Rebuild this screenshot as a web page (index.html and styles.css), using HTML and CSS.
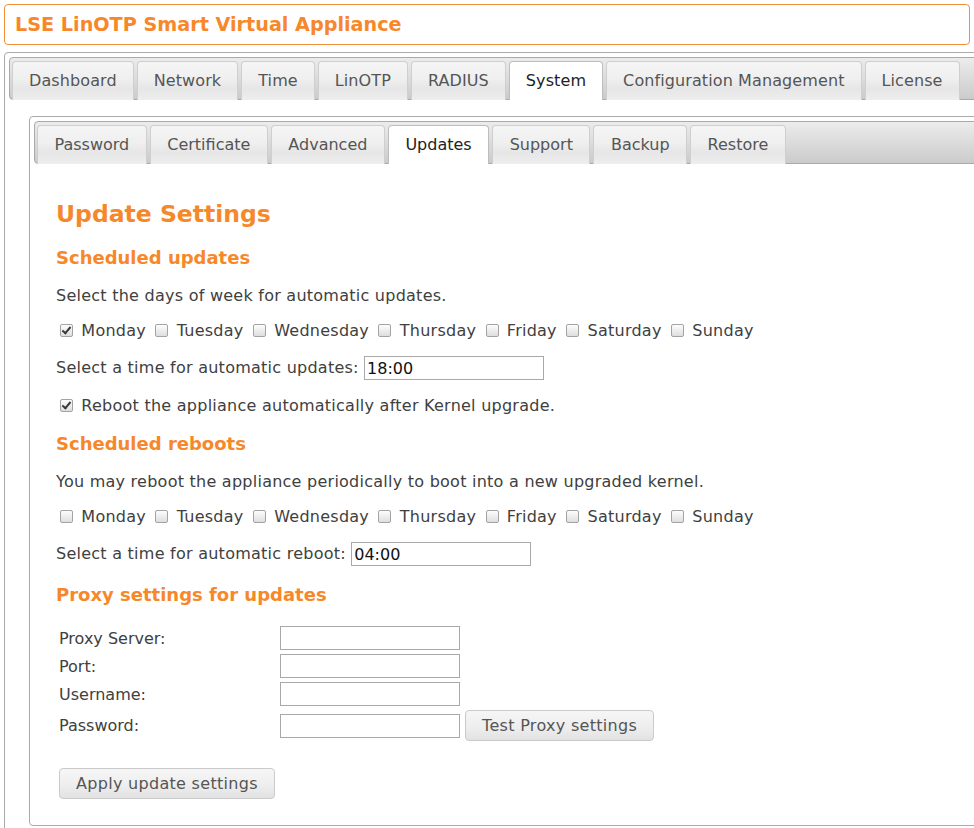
FILE: index.html
```html
<!DOCTYPE html>
<html lang="en">
<head>
  <meta charset="UTF-8">
  <title>LSE LinOTP Smart Virtual Appliance</title>
  <meta name="viewport" content="width=device-width, initial-scale=1.0">
  <link rel="stylesheet" href="styles.css">
</head>
<body>

<div class="header">
  <h1>LSE LinOTP Smart Virtual Appliance</h1>
</div>

<div class="tabs main-tabs">
  <ul class="tab-nav">
    <li><a href="#">Dashboard</a></li>
    <li><a href="#">Network</a></li>
    <li><a href="#">Time</a></li>
    <li><a href="#">LinOTP</a></li>
    <li><a href="#">RADIUS</a></li>
    <li class="active"><a href="#">System</a></li>
    <li><a href="#">Configuration Management</a></li>
    <li><a href="#">License</a></li>
  </ul>

  <div class="tab-panel">
    <div class="tabs sub-tabs">
      <ul class="tab-nav">
        <li><a href="#">Password</a></li>
        <li><a href="#">Certificate</a></li>
        <li><a href="#">Advanced</a></li>
        <li class="active"><a href="#">Updates</a></li>
        <li><a href="#">Support</a></li>
        <li><a href="#">Backup</a></li>
        <li><a href="#">Restore</a></li>
      </ul>

      <div class="tab-panel settings">
        <h2>Update Settings</h2>

        <h3>Scheduled updates</h3>
        <p>Select the days of week for automatic updates.</p>
        <p>
          <input type="checkbox" checked> Monday
          <input type="checkbox"> Tuesday
          <input type="checkbox"> Wednesday
          <input type="checkbox"> Thursday
          <input type="checkbox"> Friday
          <input type="checkbox"> Saturday
          <input type="checkbox"> Sunday
        </p>
        <p>Select a time for automatic updates: <input type="text" class="time" value="18:00"></p>
        <p><input type="checkbox" checked> Reboot the appliance automatically after Kernel upgrade.</p>

        <h3>Scheduled reboots</h3>
        <p>You may reboot the appliance periodically to boot into a new upgraded kernel.</p>
        <p>
          <input type="checkbox"> Monday
          <input type="checkbox"> Tuesday
          <input type="checkbox"> Wednesday
          <input type="checkbox"> Thursday
          <input type="checkbox"> Friday
          <input type="checkbox"> Saturday
          <input type="checkbox"> Sunday
        </p>
        <p>Select a time for automatic reboot: <input type="text" class="time" value="04:00"></p>

        <h3>Proxy settings for updates</h3>
        <table class="proxy">
          <tr>
            <td class="label">Proxy Server:</td>
            <td><input type="text"></td>
          </tr>
          <tr>
            <td class="label">Port:</td>
            <td><input type="text"></td>
          </tr>
          <tr>
            <td class="label">Username:</td>
            <td><input type="text"></td>
          </tr>
          <tr>
            <td class="label">Password:</td>
            <td><input type="password"> <button>Test Proxy settings</button></td>
          </tr>
        </table>

        <div class="actions">
          <button>Apply update settings</button>
        </div>
      </div>
    </div>
  </div>
</div>

</body>
</html>
```

FILE: styles.css
```css
:root {
  --orange: #f7882a;
  --border: #aaaaaa;
  --tab-border: #cfcfcf;
  --text: #404040;
}

* {
  box-sizing: border-box;
}

html, body {
  overflow: hidden;
}

body {
  font-family: 'DejaVu Sans', Verdana, sans-serif;
  font-size: 16px;
  color: var(--text);
  margin: 0;
  padding: 4px;
  background: #fff;
}

/* header */

.header {
  border: 1px solid #f0903c;
  border-radius: 4px;
  padding: 9px 10px;
  margin-bottom: 7px;
}

.header h1 {
  margin: 0;
  font-size: 19.2px;
  line-height: 21px;
  font-weight: bold;
  color: var(--orange);
}

/* tabs */

.tabs {
  border: 1px solid var(--border);
  border-radius: 4px;
  padding: 4px;
  background: #fff;
}

.main-tabs {
  width: 1010px;
}

.tab-nav {
  list-style: none;
  margin: 0;
  padding: 3px 2px 0;
  display: flex;
  border: 1px solid var(--border);
  border-radius: 4px;
  background: linear-gradient(to bottom, #ececec, #cbcbcb);
}

.tab-nav li {
  margin: 0 3px -1px 0;
  border: 1px solid var(--tab-border);
  border-bottom: none;
  border-radius: 4px 4px 0 0;
  background: linear-gradient(to bottom, #f5f5f5 0%, #efefef 45%, #e6e6e6 70%, #eeeeee 100%);
}

.tab-nav li a {
  display: block;
  padding: 0 16px;
  line-height: 37px;
  color: #555;
  text-decoration: none;
  letter-spacing: 0.1px;
}

.sub-tabs .tab-nav li a {
  padding: 0 16.5px;
  letter-spacing: 0;
}

.tab-nav li.active {
  background: #fff;
  border-color: #bdbdbd;
  padding-bottom: 1px;
}

.tab-nav li.active a {
  color: #222;
}

.tab-panel {
  padding: 16px 20px;
}

.sub-tabs .settings {
  padding: 16px 22px 16px;
}

/* settings content */

h2 {
  font-size: 23.5px;
  color: var(--orange);
  margin: 0.83em 0;
}

h3 {
  font-size: 18px;
  color: var(--orange);
  margin: 1em 0;
}

p {
  margin: 16px 0;
  letter-spacing: 0.25px;
}

input[type="text"],
input[type="password"] {
  font-family: 'DejaVu Sans', Verdana, sans-serif;
  font-size: 16px;
  letter-spacing: 0;
  color: #111;
  width: 180px;
  height: 24px;
  padding: 1px 2px;
  border: 1px solid #a9a9a9;
  border-radius: 0;
  vertical-align: middle;
  margin: 0;
}

input[type="checkbox"] {
  -webkit-appearance: none;
  appearance: none;
  position: relative;
  width: 13px;
  height: 13px;
  margin: 0 3px 0 4px;
  border: 1px solid #a3a3a3;
  border-radius: 2px;
  background: linear-gradient(to bottom, #fdfdfd, #dedede);
  vertical-align: -1px;
}

input[type="checkbox"]:checked::after {
  content: "";
  position: absolute;
  left: 3px;
  top: 0;
  width: 3px;
  height: 7px;
  border: solid #3a3a3a;
  border-width: 0 2px 2px 0;
  transform: rotate(40deg);
}

/* proxy table */

.proxy {
  border-spacing: 2px;
  margin: 0;
}

.proxy td {
  padding: 1px;
  vertical-align: middle;
}

.proxy td.label {
  width: 219px;
}

button {
  font-family: 'DejaVu Sans', Verdana, sans-serif;
  font-size: 16px;
  letter-spacing: 0.3px;
  color: #555;
  padding: 5px 16px;
  line-height: 19px;
  border: 1px solid #cacaca;
  border-radius: 4px;
  background: linear-gradient(to bottom, #f6f6f6 0%, #eeeeee 55%, #e2e2e2 100%);
  cursor: pointer;
  vertical-align: middle;
}

.actions {
  margin: 24px 0 6px 3px;
}
```
